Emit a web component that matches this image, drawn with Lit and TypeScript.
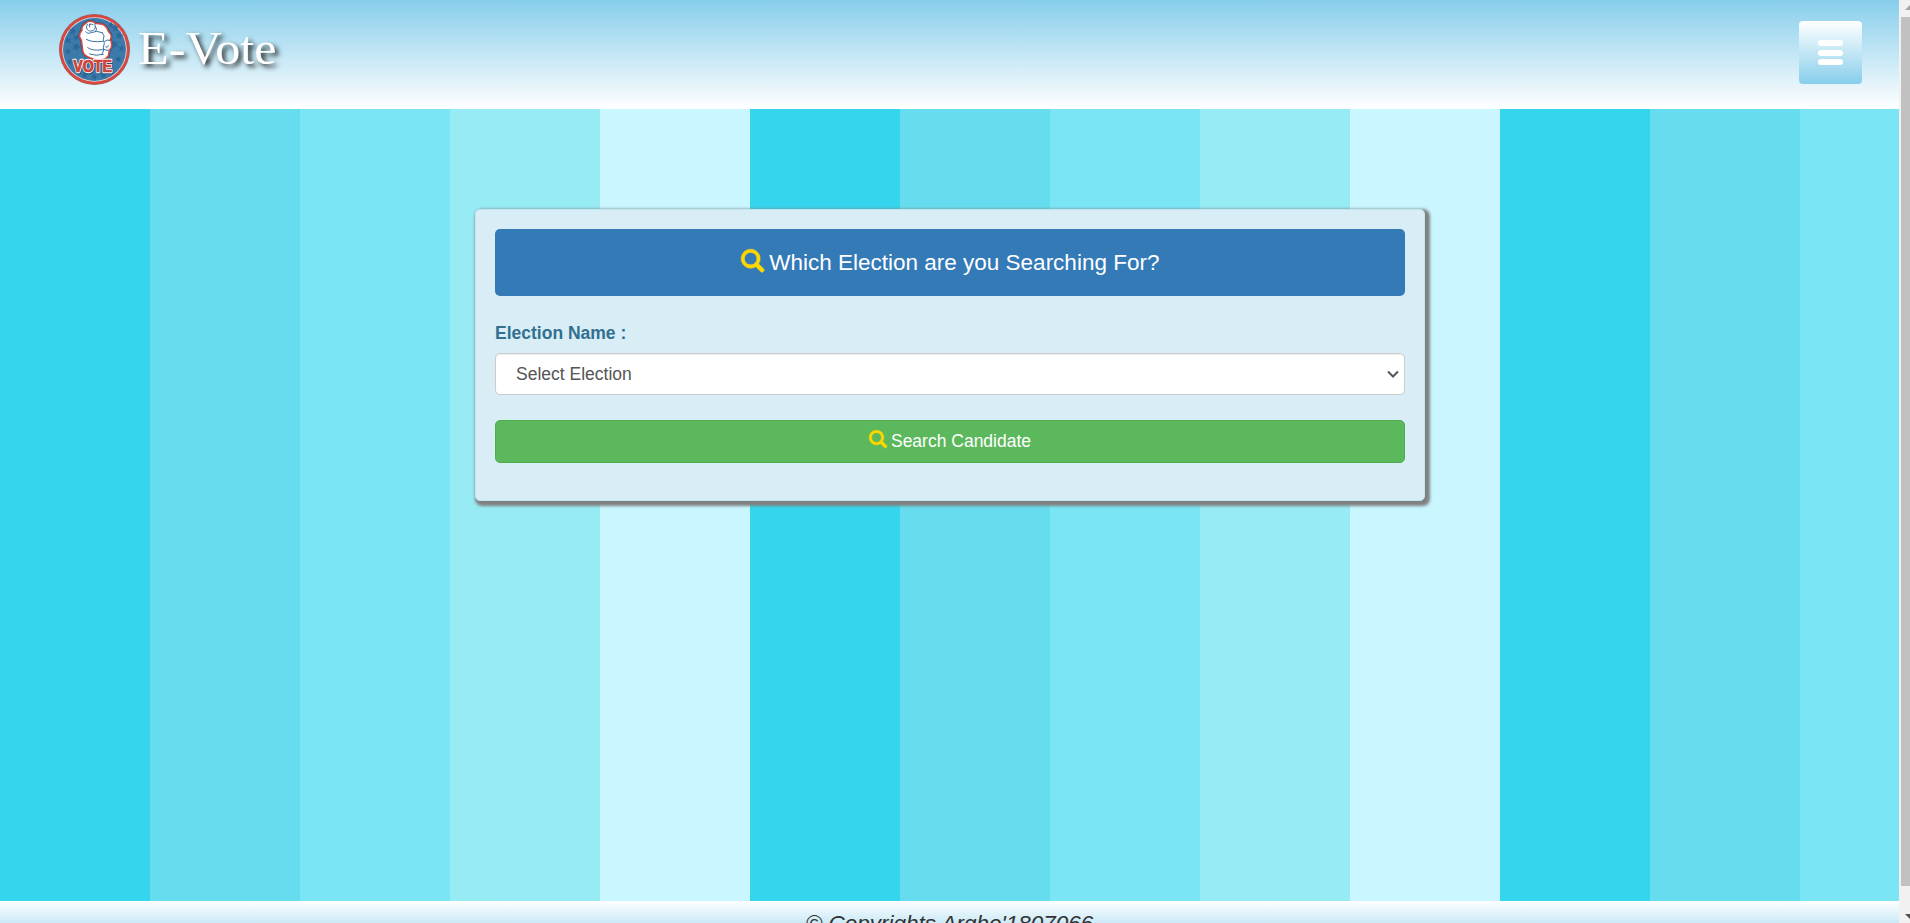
import { LitElement, html, css, svg } from "lit";
import { customElement } from "lit/decorators.js";

const searchIcon = html`<svg class="glyph" viewBox="0 0 1200 1200" aria-hidden="true">
  <path transform="matrix(1 0 0 -1 0 1200)" d="M500 1191q100 0 191 -39t156.5 -104.5t104.5 -156.5t39 -191l-1 -2l1 -5q0 -141 -78 -262l275 -274q23 -26 22.5 -44.5t-22.5 -42.5l-59 -58q-26 -20 -46.5 -20t-39.5 20l-275 274q-119 -77 -261 -77l-5 1l-2 -1q-100 0 -191 39t-156.5 104.5t-104.5 156.5t-39 191t39 191t104.5 156.5t156.5 104.5t191 39zM500 1022q-88 0 -162 -43t-117 -117t-43 -162t43 -162t117 -117t162 -43t162 43t117 117t43 162t-43 162t-117 117t-162 43z"/>
</svg>`;

const stars = [
  [68, 78, 10, 10], [54, 106, 9, -12], [79, 125, 11, 20], [54, 139, 9, 5],
  [196, 68, 10, -8], [208, 91, 10, 12], [193, 118, 11, -15], [215, 130, 9, 8],
  [183, 59, 8, 5], [104, 210, 9, 0], [133, 215, 9, 10],
  [160, 211, 9, -10], [60, 170, 8, 10], [205, 162, 9, 0], [78, 98, 8, 30],
];

@customElement("vote-badge")
export class VoteBadge extends LitElement {
  static styles = css`
    :host { display: block; width: 90px; height: 90px; }
    svg { display: block; width: 100%; height: 100%; }
    .word {
      font: bold 49px "Liberation Sans", Arial, sans-serif;
      paint-order: stroke; stroke-linejoin: round;
    }
  `;
  render() {
    return html`<svg viewBox="0 0 270 270" role="img">
      <circle cx="133.500" cy="133.500" r="106.500" fill="#8d6470"/>
      <circle cx="133.500" cy="133.500" r="105" fill="#d9483f"/>
      <circle cx="133.500" cy="133.500" r="97" fill="#dbe3e8"/>
      <circle cx="133.500" cy="133.500" r="94.500" fill="#3c7aac"/>
      ${stars.map(([x, y, r, a]) => svg`<path fill="#2c6797"
        transform="translate(${x} ${y}) rotate(${a}) scale(${r / 10})"
        d="M0-12 3.200-4 12-3.500 5 2 7.500 11 0 6-7.500 11-5 2-12-3.500-3.200-4z"/>`)}
      <path d="M109 54C113 46 130 47 136 55L157 58C170 62 172 73 176 81C184 87 185 97 181 104C187 114 187 128 178 136L175 153C167 166 145 166 132 163C118 159 102 153 99 141L94 105C85 96 88 85 96 76C94 68 99 58 109 54Z" fill="#fff" stroke="#245f91" stroke-width="9"/>
      <path d="M109 54C113 46 130 47 136 55L157 58C170 62 172 73 176 81C184 87 185 97 181 104C187 114 187 128 178 136L175 153C167 166 145 166 132 163C118 159 102 153 99 141L94 105C85 96 88 85 96 76C94 68 99 58 109 54Z" fill="#fff" stroke="#d9483f" stroke-width="4.500"/>
      <g fill="none" stroke="#2c6899" stroke-width="2.800" stroke-linecap="round">
        <path d="M112 58C106 68 111 79 123 78C134 78 139 67 134 57M117 60Q123 53 129 59M119 57V66M137 65Q143 73 137 80"/>
        <path d="M107 80Q112 88 124 83Q139 75 157 83M109 103Q124 113 158 109M113 128Q128 139 157 134M119 147Q137 154 160 148"/>
        <path d="M157 83Q166 91 160 104Q166 115 160 127Q163 139 156 147M164 109Q171 102 179 106M167 126Q173 130 176 122M160 132Q167 137 175 136"/>
      </g>
      <text class="word" x="72" y="204" textLength="116" lengthAdjust="spacingAndGlyphs" fill="#264f76" stroke="#264f76" stroke-width="7">VOTE</text>
      <text class="word" x="70" y="201" textLength="116" lengthAdjust="spacingAndGlyphs" fill="#d9483f" stroke="#fff" stroke-width="7">VOTE</text>
      <text class="word" x="70" y="201" textLength="116" lengthAdjust="spacingAndGlyphs" fill="#d0443c" stroke="#d0443c" stroke-width="2">VOTE</text>
    </svg>`;
  }
}

@customElement("app-root")
export class AppRoot extends LitElement {
  static styles = css`
    :host {
      display: flex; width: 100%; height: 923px; overflow: hidden;
      font-family: "Liberation Sans", Arial, sans-serif;
    }
    * { box-sizing: border-box; }
    .page { flex: 1; min-width: 0; display: flex; flex-direction: column; }
    header {
      height: 109px; flex: none; display: flex; justify-content: space-between;
      align-items: flex-start; padding: 5px 37px 0 50px;
      background: linear-gradient(skyblue, white);
    }
    .brand { display: flex; align-items: flex-start; }
    .brand h1 {
      margin: 16px 0 0 -2px; font: 400 47px/54px "Liberation Serif", serif;
      color: #fff; text-shadow: 3px 3px 5px #222;
      transform: scaleX(1.068); transform-origin: left;
    }
    .menu {
      width: 63px; height: 63px; margin-top: 16px; padding: 0; border: 0; border-radius: 4px;
      background: linear-gradient(white, skyblue);
      display: flex; flex-direction: column; align-items: center; justify-content: center; gap: 3.5px;
    }
    .menu span { width: 25px; height: 6px; border-radius: 3px; background: #fff; }
    main {
      flex: 1; padding-top: 100px;
      background: repeating-linear-gradient(90deg, #35d6ed 0 150px, #65ddef 150px 300px,
        #7ae5f5 300px 450px, #97ebf4 450px 600px, #c9f6ff 600px 750px);
    }
    .panel {
      width: 950px; height: 292px; margin: 0 0 0 475px; padding: 19px;
      background: #d9edf7; border: 1px solid #bce8f1; border-radius: 5px;
      box-shadow: 2.5px 2.5px 3px 2.2px gray;
    }
    .banner {
      height: 67px; display: flex; align-items: center; justify-content: center; gap: 5.5px;
      margin: 0; border-radius: 5px; background: #337ab7; color: #fff;
      font-size: 22.5px; font-weight: 400; line-height: 26px;
    }
    .glyph {
      width: 1.03em; height: 1.03em; fill: gold; stroke: gold; stroke-width: 30;
      display: block; margin-top: -4px; overflow: visible;
    }
    .label {
      display: block; margin-top: 24px; font-size: 17.5px; font-weight: 700; line-height: 26px;
      color: #31708f;
    }
    .select {
      height: 42px; margin-top: 7px; padding: 0 5px 0 20px; display: flex; align-items: center;
      justify-content: space-between; background: #fff; border: 1px solid #ccc; border-radius: 5px;
      box-shadow: inset 0 1px 1px rgba(0,0,0,.075); color: #555; font-size: 17.5px;
    }
    .chevron { width: 12px; height: 8px; fill: none; stroke: #555; stroke-width: 2; }
    .go {
      width: 100%; height: 43px; margin-top: 25px; padding: 0; display: flex; align-items: center;
      justify-content: center; gap: 4px; background: #5cb85c; border: 1px solid #4cae4c;
      border-radius: 5px; color: #fff; font: 17.5px "Liberation Sans", Arial, sans-serif;
    }
    footer {
      height: 22px; flex: none; overflow: hidden; text-align: center; padding-top: 10px;
      color: #333; font-size: 22.5px; font-style: italic; line-height: 26px;
      background: linear-gradient(white, skyblue) top / 100% 50px no-repeat;
    }
    .scroll {
      width: 11px; flex: none; overflow: hidden; background: #f1f1f1;
      display: flex; flex-direction: column; padding-left: 2px;
    }
    .thumb { height: 869px; background: #c1c1c1; }
    .arrow { width: 10px; height: 17px; margin-left: 4px; flex: none; }
    .arrow.down { height: 37px; }
  `;
  render() {
    return html`
      <div class="page">
        <header>
          <div class="brand"><vote-badge></vote-badge><h1>E-Vote</h1></div>
          <button class="menu" aria-label="Menu"><span></span><span></span><span></span></button>
        </header>
        <main>
          <section class="panel">
            <h3 class="banner">${searchIcon}<span>Which Election are you Searching For?</span></h3>
            <span class="label">Election Name :</span>
            <div class="select"><span>Select Election</span>
              <svg class="chevron" viewBox="0 0 12 8"><path d="M1 1.500 6 6.500 11 1.500"/></svg>
            </div>
            <button class="go">${searchIcon}<span>Search Candidate</span></button>
          </section>
        </main>
        <footer>© Copyrights Argho'1807066</footer>
      </div>
      <div class="scroll">
        <svg class="arrow" viewBox="0 0 10 17"><path fill="#a3a3a3" d="M0 10 5 5 10 10z"/></svg>
        <div class="thumb"></div>
        <svg class="arrow down" viewBox="0 0 10 37"><path fill="#505050" d="M0 28H10L5 33z"/></svg>
      </div>`;
  }
}
